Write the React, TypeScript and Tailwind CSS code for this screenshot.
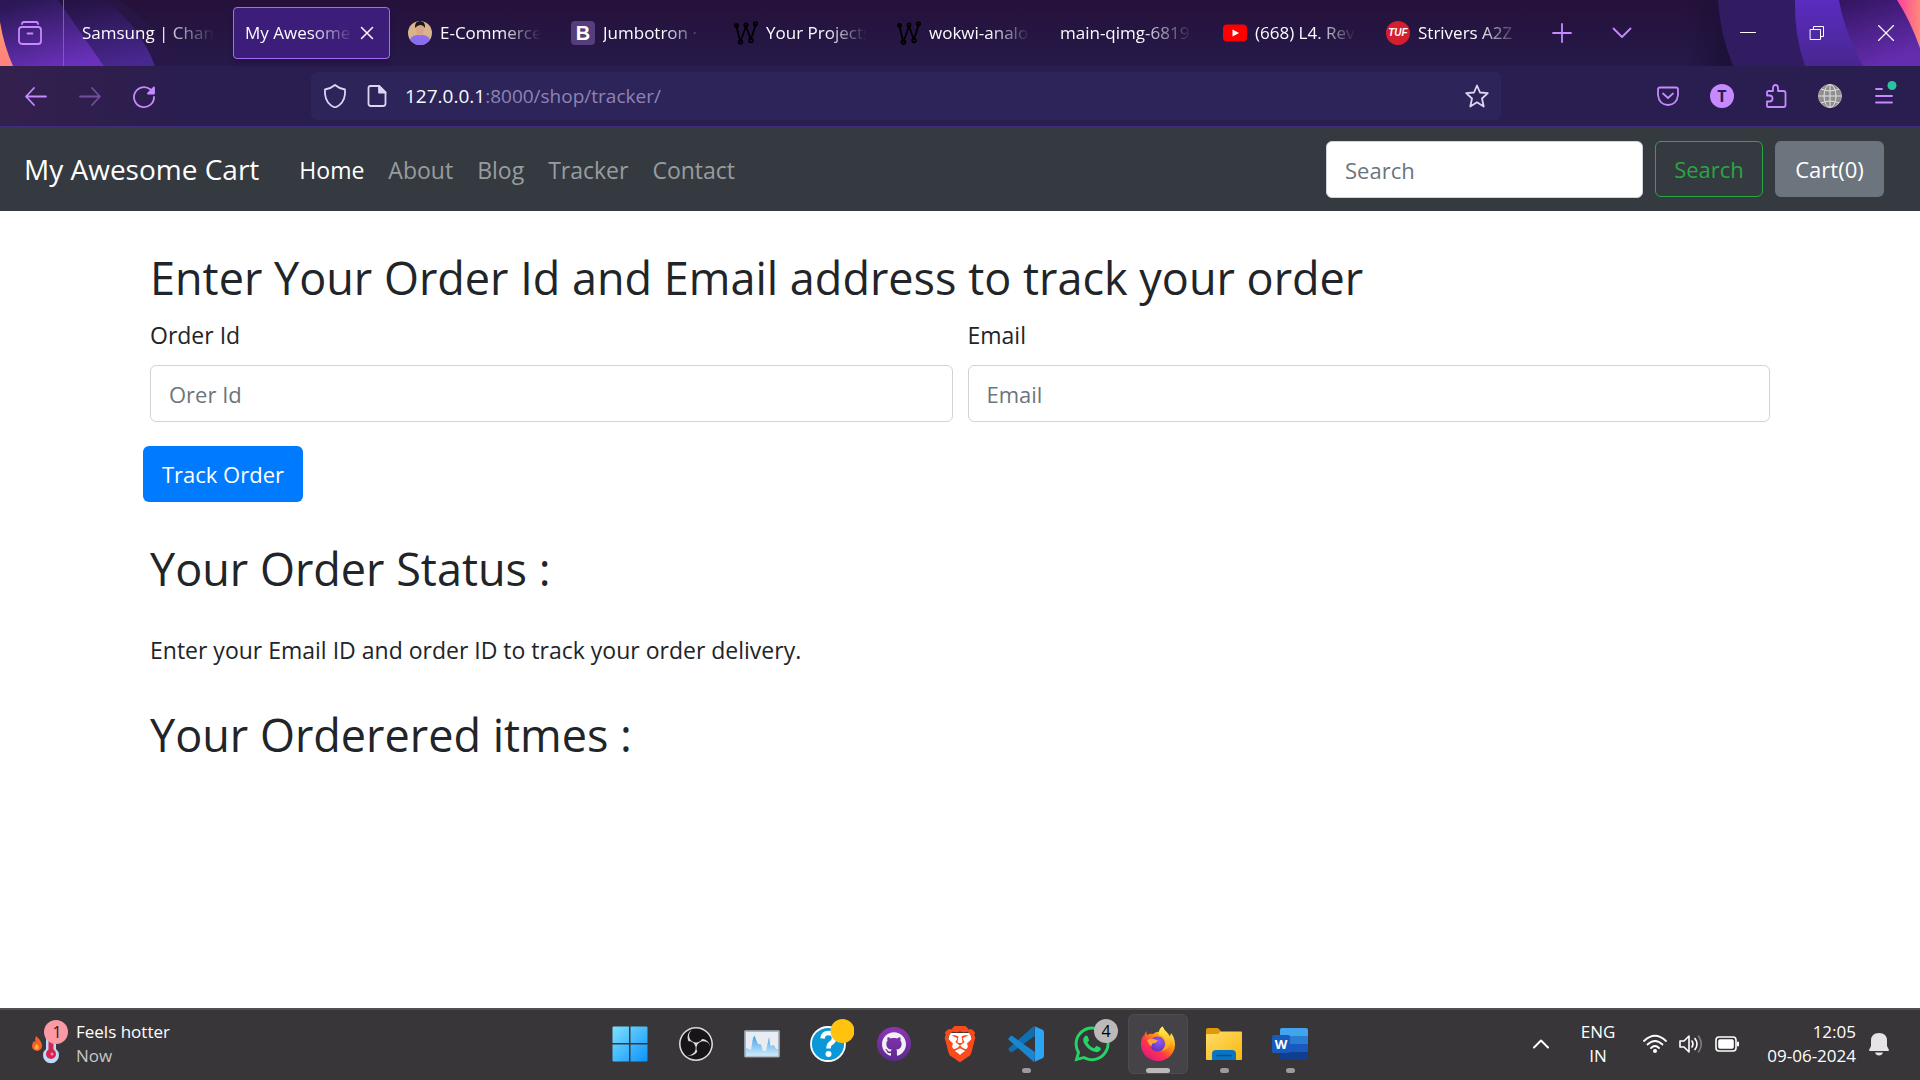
import React from "react";
import { SiBrave, SiGithub, SiObsstudio } from "react-icons/si";
import { FaWhatsapp } from "react-icons/fa";

const line = { fill: "none", strokeLinecap: "round", strokeLinejoin: "round" } as const;

function ThemeArt() {
  return (
    <div aria-hidden="true" className="absolute inset-0 flex justify-between overflow-hidden">
      <svg width="190" height="66" viewBox="0 0 190 66">
        <defs>
          <linearGradient id="la" x1="0.3" y1="0" x2="0.7" y2="1">
            <stop offset="0" stopColor="#2c1857" />
            <stop offset="1" stopColor="#6b31bd" />
          </linearGradient>
          <linearGradient id="lb" x1="0.2" y1="0" x2="0.5" y2="1">
            <stop offset="0" stopColor="#241343" />
            <stop offset="1" stopColor="#48278f" />
          </linearGradient>
          <linearGradient id="lo" x1="0" y1="0" x2="0" y2="1">
            <stop offset="0" stopColor="#ff9a6c" />
            <stop offset="1" stopColor="#ff8080" />
          </linearGradient>
        </defs>
        <path d="M58 0H120Q160 30 182 66H104Z" fill="#29174a" opacity="0.6" />
        <path d="M58 0H105Q140 26 155 66H104Z" fill="url(#lb)" />
        <path d="M0 0H58L104 66H0Z" fill="url(#la)" />
        <path d="M0 22Q4 46 13 66H0Z" fill="url(#lo)" />
      </svg>
      <svg width="240" height="66" viewBox="0 0 240 66">
        <defs>
          <linearGradient id="rs" x1="0" y1="0" x2="1" y2="0">
            <stop offset="0" stopColor="#1b1036" stopOpacity="0" />
            <stop offset="1" stopColor="#1b1036" />
          </linearGradient>
          <linearGradient id="rb" x1="0" y1="0" x2="0" y2="1">
            <stop offset="0" stopColor="#5a2cc0" />
            <stop offset="1" stopColor="#48268f" />
          </linearGradient>
          <linearGradient id="rc" x1="0" y1="0" x2="0.4" y2="1">
            <stop offset="0" stopColor="#321560" />
            <stop offset="1" stopColor="#642cae" />
          </linearGradient>
          <linearGradient id="rp" x1="0" y1="0" x2="1" y2="0">
            <stop offset="0" stopColor="#ff3f9e" />
            <stop offset="1" stopColor="#ff8a78" />
          </linearGradient>
        </defs>
        <path d="M5 0H40L54 66H5Z" fill="url(#rs)" />
        <path d="M38 0H240V66H53Q40 34 38 0Z" fill="#311c61" />
        <path d="M115 0H240V66H125Q114 34 115 0Z" fill="url(#rb)" />
        <path d="M159 0H240V66H183Q164 30 159 0Z" fill="url(#rc)" />
        <path d="M217 0H240V48Q230 20 217 0Z" fill="url(#rp)" />
      </svg>
    </div>
  );
}

function Portrait() {
  return (
    <svg width="24" height="24" viewBox="0 0 24 24">
      <clipPath id="face"><circle cx="12" cy="12" r="12" /></clipPath>
      <g clipPath="url(#face)">
        <rect width="24" height="24" fill="#d9b48c" />
        <path d="M0 24Q2 14 9 14H15Q22 14 24 24Z" fill="#8a6cf5" />
        <ellipse cx="12" cy="8.500" rx="4" ry="6" fill="#d8a58a" />
        <path d="M7 7Q6.500 0 12 0T17 7Q15 3.500 12 4T7 7Z" fill="#1c1416" />
      </g>
    </svg>
  );
}

function BootstrapMark() {
  return (
    <span className="flex size-6 items-center justify-center rounded bg-[#563d7c] font-['Liberation_Sans'] text-xl leading-none font-bold text-white">
      B
    </span>
  );
}

function WokwiMark() {
  return (
    <svg width="24" height="24" viewBox="0 0 24 24" {...line} stroke="#000" strokeWidth="1.8">
      <path d="M2.500 5L6 20Q7 20 12 5L16.500 18Q17 19 21.500 4" />
      <circle cx="2.500" cy="4.500" r="1.700" />
      <circle cx="12" cy="4" r="1.700" />
      <circle cx="21.500" cy="2.800" r="1.700" />
      <circle cx="6.500" cy="21" r="1.800" />
      <circle cx="17" cy="19.500" r="1.800" />
    </svg>
  );
}

function YoutubeMark() {
  return (
    <svg width="24" height="24" viewBox="0 0 24 24">
      <rect y="3.500" width="24" height="17" rx="4" fill="#f00" />
      <path d="M9.500 8.500L16 12L9.500 15.500Z" fill="#fff" />
    </svg>
  );
}

function TufMark() {
  return (
    <span className="flex size-6 items-center justify-center rounded-full bg-[#d51f30] font-['Liberation_Sans'] text-[10px] leading-none font-bold text-white italic">
      TUF
    </span>
  );
}

type TabInfo = { title: string; icon?: React.ReactNode; active?: boolean };

const tabs: TabInfo[] = [
  { title: "Samsung | Chang" },
  { title: "My Awesome", active: true },
  { title: "E-Commerce", icon: <Portrait /> },
  { title: "Jumbotron ·", icon: <BootstrapMark /> },
  { title: "Your Projects", icon: <WokwiMark /> },
  { title: "wokwi-analo", icon: <WokwiMark /> },
  { title: "main-qimg-6819" },
  { title: "(668) L4. Rev", icon: <YoutubeMark /> },
  { title: "Strivers A2Z", icon: <TufMark /> },
];

function Tab({ title, icon, active }: TabInfo) {
  return (
    <div className="w-[163px] shrink px-[3px] py-[7px]">
      <div
        role="tab"
        aria-selected={!!active}
        className={
          active
            ? "flex h-full items-center gap-1 rounded border border-[#a76bf5] bg-[#3d1d7a] pr-[13px] pl-[11px] shadow-md"
            : "flex h-full items-center gap-2 px-3"
        }
      >
        {icon && <span className="shrink-0">{icon}</span>}
        <span className="min-w-0 flex-1 overflow-hidden text-[17px] whitespace-nowrap [mask-image:linear-gradient(to_right,#000_60%,transparent)]">
          {title}
        </span>
        {active && (
          <button aria-label="Close tab" className="shrink-0">
            <svg width="18" height="18" viewBox="0 0 18 18" {...line} stroke="#fbfbfe" strokeWidth="1.500">
              <path d="M3.500 3.500L14.500 14.500M14.500 3.500L3.500 14.500" />
            </svg>
          </button>
        )}
      </div>
    </div>
  );
}

function TabStrip() {
  return (
    <div className="relative bg-linear-to-b from-[#25113a] to-[#26194a]">
      <ThemeArt />
      <div className="relative flex h-[66px] items-stretch">
        <div className="flex w-16 shrink-0 items-center justify-center border-r border-[#7d5cb0] pr-1">
          <button aria-label="Firefox View">
            <svg width="26" height="26" viewBox="0 0 26 26" {...line} stroke="#c689ff" strokeWidth="1.800">
              <path d="M5 4Q5 2 7 2H19Q21 2 21 4" />
              <rect x="2" y="7" width="22" height="17" rx="3" />
              <path d="M10.500 13.500H15.500" />
            </svg>
          </button>
        </div>
        <div role="tablist" className="ml-[3px] flex min-w-0">
          {tabs.map((t) => (
            <Tab key={t.title} {...t} />
          ))}
        </div>
        <button aria-label="New tab" className="flex w-14 items-center justify-center">
          <svg width="20" height="20" viewBox="0 0 20 20" {...line} stroke="#c689ff" strokeWidth="1.800">
            <path d="M10 1V19M1 10H19" />
          </svg>
        </button>
        <button aria-label="List all tabs" className="flex w-16 items-center justify-center">
          <svg width="20" height="20" viewBox="0 0 20 20" {...line} stroke="#c689ff" strokeWidth="1.800">
            <path d="M1.500 5.500L10 14L18.500 5.500" />
          </svg>
        </button>
        <div className="ml-auto flex">
          <button aria-label="Minimize" className="flex w-[69px] items-center justify-center">
            <svg width="16" height="16" viewBox="0 0 16 16" {...line} stroke="#fff"><path d="M.5 7.500H15.500" /></svg>
          </button>
          <button aria-label="Restore" className="flex w-[69px] items-center justify-center">
            <svg width="16" height="16" viewBox="0 0 16 16" {...line} stroke="#fff">
              <path d="M1.500 4.500H11.500V14.500H1.500ZM4.500 4.500V1.500H14.500V11.500H11.500" />
            </svg>
          </button>
          <button aria-label="Close window" className="flex w-[69px] items-center justify-center">
            <svg width="16" height="16" viewBox="0 0 16 16" {...line} stroke="#fff" strokeWidth="1.200">
              <path d="M.5 .5L15.500 15.500M15.500 .5L.5 15.500" />
            </svg>
          </button>
        </div>
      </div>
    </div>
  );
}

function ToolButton({ label, children }: { label: string; children: React.ReactNode }) {
  return (
    <button aria-label={label} className="flex h-12 w-[54px] items-center justify-center">
      <svg width="24" height="24" viewBox="0 0 24 24" {...line} stroke="#c689ff" strokeWidth="1.800" className="overflow-visible">
        {children}
      </svg>
    </button>
  );
}

function Toolbar() {
  return (
    <div className="flex items-center border-b border-[#3e2c7c] bg-linear-to-r from-[#33204d] via-[#2a1d4f] via-10% to-[#2a1d4f] py-[6px]">
      <div className="flex w-[311px] shrink-0 pl-[9px]">
        <ToolButton label="Back"><path d="M22 12.500H2M10 4L2 12.500L10 21" /></ToolButton>
        <ToolButton label="Forward"><g opacity="0.45"><path d="M2 12.500H22M14 4L22 12.500L14 21" /></g></ToolButton>
        <ToolButton label="Reload">
          <path d="M22 13A10 10 0 1 1 18.500 5.500" />
          <path d="M22 3.500V9.500H16Z" fill="#c689ff" />
        </ToolButton>
      </div>
      <div className="flex h-12 min-w-0 flex-1 items-center rounded-md bg-[#2d2459] px-3">
        <svg width="24" height="24" viewBox="0 0 24 24" {...line} stroke="#e0d4f5" strokeWidth="1.800">
          <path d="M12 1Q16 4.500 22 5.500V10Q21 20 12 23.500Q3 20 2 10V5.500Q8 4.500 12 1Z" />
        </svg>
        <svg width="24" height="24" viewBox="0 0 24 24" {...line} stroke="#e0d4f5" strokeWidth="1.800" className="mr-4 ml-[18px]">
          <path d="M5.500 2H14L20.500 8.500V19.500Q20.500 22 18 22H6Q3.500 22 3.500 19.500V4Q3.500 2 5.500 2Z" />
          <path d="M14 2V8.500H20.500Z" fill="#e0d4f5" />
        </svg>
        <p className="min-w-0 flex-1 truncate text-[19px] text-[#8d84b4]">
          <span className="text-[#fbfbfe]">127.0.0.1</span>:8000/shop/tracker/
        </p>
        <button aria-label="Bookmark this page">
          <svg width="24" height="24" viewBox="0 0 24 24" {...line} stroke="#e0d4f5" strokeWidth="1.800">
            <path d="M12 1.500L15 8.500L22.800 9.200L17 14.500L18.700 22.500L12 18.300L5.300 22.500L7 14.500L1.200 9.200L9 8.500Z" />
          </svg>
        </button>
      </div>
      <div className="flex w-[419px] shrink-0 justify-end pr-[9px]">
        <ToolButton label="Save to Pocket">
          <path d="M4 3.500H20Q22 3.500 22 5.500V11Q21 20.500 12 21Q3 20.500 2 11V5.500Q2 3.500 4 3.500Z" />
          <path d="M7 9.500L12 14L17 9.500" />
        </ToolButton>
        <button aria-label="Account" className="flex h-12 w-[54px] items-center justify-center">
          <span className="flex size-6 items-center justify-center rounded-full bg-[#c689ff] text-base leading-none font-bold text-[#2a1d4f]">T</span>
        </button>
        <ToolButton label="Extensions">
          <path d="M3 11V8.500Q3 7 4.500 7H9V4Q9 1 11.500 1T14 4V7H19.500Q21.500 7 21.500 9V21Q21.500 23 19.500 23H4Q3 23 3 22V17.500H5.500Q8.500 17.500 8.500 14.500T5.500 11.500H3" />
        </ToolButton>
        <button aria-label="Translate" className="flex h-12 w-[54px] items-center justify-center">
          <svg width="24" height="24" viewBox="0 0 24 24" fill="none" stroke="#e2e2e2" strokeWidth="1">
            <circle cx="12" cy="12" r="11.500" fill="#8e8e8e" stroke="#aaa" />
            <ellipse cx="12" cy="12" rx="6" ry="11.500" />
            <path d="M12 .5V23.500M.5 12H23.500M3 5Q12 9 21 5M3 19Q12 15 21 19" />
          </svg>
        </button>
        <ToolButton label="Open application menu">
          <path d="M4 5H10M4 12H20M4 18.500H20" />
          <circle cx="20" cy="1.500" r="4.500" fill="#2ac3a2" stroke="none" />
        </ToolButton>
      </div>
    </div>
  );
}

const navLinks = ["Home", "About", "Blog", "Tracker", "Contact"];

function Navbar() {
  return (
    <nav className="flex items-center bg-[#343a40] px-6 pt-[14px] pb-[13px]">
      <a href="#home" className="mr-7 text-[28px] leading-[45px] text-white">My Awesome Cart</a>
      <ul className="flex">
        {navLinks.map((name, i) => (
          <li key={name}>
            <a href={"#" + name.toLowerCase()} className={i === 0 ? "px-3 text-white" : "px-3 text-[#999c9f]"}>
              {name}
            </a>
          </li>
        ))}
      </ul>
      <form className="mr-3 ml-auto flex items-start gap-3 text-[22px]" onSubmit={(e) => e.preventDefault()}>
        <input
          type="search"
          aria-label="Search"
          placeholder="Search"
          className="h-[57px] w-[317px] rounded-md border border-[#ced4da] bg-white px-[18px] text-[#495057] placeholder:text-[#6c757d]"
        />
        <button type="submit" className="h-14 w-[108px] rounded-md border border-[#28a745] text-[#28a745]">Search</button>
        <button type="button" className="h-14 w-[109px] rounded-md bg-[#6c757d] text-white">Cart(0)</button>
      </form>
    </nav>
  );
}

function Field({ id, label, placeholder, type }: { id: string; label: string; placeholder: string; type: string }) {
  return (
    <div className="flex flex-col gap-3">
      <label htmlFor={id}>{label}</label>
      <input
        id={id}
        type={type}
        placeholder={placeholder}
        className="h-[57px] w-full rounded-md border border-[#ced4da] px-[18px] text-[22px] text-[#495057] placeholder:text-[#6c757d]"
      />
    </div>
  );
}

function Heading({ children }: { children: React.ReactNode }) {
  return <h2 className="mb-3 pt-1 text-[45px] leading-[54px]">{children}</h2>;
}

function TrackerPage() {
  return (
    <main className="flex-1 bg-white px-[150px] pt-9 text-[#212529]">
      <Heading>Enter Your Order Id and Email address to track your order</Heading>
      <form onSubmit={(e) => e.preventDefault()}>
        <div className="mb-6 grid grid-cols-2 gap-[15px]">
          <Field id="orderId" label="Order Id" placeholder="Orer Id" type="text" />
          <Field id="email" label="Email" placeholder="Email" type="email" />
        </div>
        <button type="submit" className="-ml-[7px] h-14 w-40 rounded-md bg-[#007bff] text-[22px] text-white">Track Order</button>
      </form>
      <section className="mt-9">
        <Heading>Your Order Status :</Heading>
        <p className="mt-9">Enter your Email ID and order ID to track your order delivery.</p>
      </section>
      <section className="mt-9">
        <Heading>Your Orderered itmes :</Heading>
      </section>
    </main>
  );
}

function WindowsIcon() {
  return (
    <svg width="36" height="36" viewBox="0 0 36 36">
      <linearGradient id="win" x1="0" y1="0" x2="1" y2="1" gradientUnits="objectBoundingBox">
        <stop offset="0" stopColor="#7fe0ff" />
        <stop offset="1" stopColor="#0a93fb" />
      </linearGradient>
      <path d="M1.500 .5H17V17H.5V1.500Q.5 .5 1.500 .5ZM18.500 .5H34.500Q35.500 .5 35.500 1.500V17H18.500ZM.5 18.500H17V35.500H1.500Q.5 35.500 .5 34.500ZM18.500 18.500H35.500V34.500Q35.500 35.500 34.500 35.500H18.500Z" fill="url(#win)" />
    </svg>
  );
}

function ObsIcon() {
  return (
    <span className="flex size-[34px] items-center justify-center rounded-full bg-[#17151a]">
      <SiObsstudio size={34} color="#dcdcdc" />
    </span>
  );
}

function MonitorIcon() {
  return (
    <svg width="36" height="36" viewBox="0 0 36 36">
      <linearGradient id="mon" x1="0" y1="0" x2="0" y2="1">
        <stop offset="0" stopColor="#3d9fe6" />
        <stop offset="1" stopColor="#cdeafa" />
      </linearGradient>
      <rect x=".5" y="4.500" width="35" height="26.500" rx="1" fill="#e9edf1" stroke="#8a98a5" />
      <rect x="1.500" y="5.500" width="33" height="24.500" fill="none" stroke="#a9b6c1" />
      <path d="M2 29.500V22L5 23L7 24L9 12L10.500 9.500L12 13.500L14 18L17 18.500L19 25H22L25 11L26.500 20L30 19L32 23H34V29.500Z" fill="url(#mon)" />
    </svg>
  );
}

function HelpIcon() {
  return (
    <svg width="44" height="44" viewBox="0 0 44 44" className="mb-[8px] ml-[8px]">
      <circle cx="18" cy="26" r="17" fill="#0a98d8" stroke="#fff" strokeWidth="1.800" />
      <path d="M12.500 20.500Q13 15 18.500 15T24 20.500Q24 23.500 20.500 25.500Q18.500 27 18.500 30.500" fill="none" stroke="#fff" strokeWidth="4.500" />
      <circle cx="18.500" cy="36" r="3" fill="#fff" />
      <circle cx="32.500" cy="13" r="12" fill="#ffc20e" />
    </svg>
  );
}

function GithubIcon() {
  return (
    <span className="flex size-[34px] items-center justify-center rounded-full bg-linear-to-b from-[#8e35b5] to-[#5b2a8c]">
      <SiGithub size={24} color="#f3eff8" />
    </span>
  );
}

function BraveIcon() {
  return (
    <span className="relative flex size-9 items-center justify-center">
      <svg width="36" height="36" viewBox="0 0 36 36" className="absolute inset-0">
        <path d="M8 7H28L30 14L26 28L18 33L10 28L6 14Z" fill="#fff" />
      </svg>
      <SiBrave size={36} color="#fb4a1c" className="relative" />
    </span>
  );
}

function VsCodeIcon() {
  return (
    <svg width="36" height="36" viewBox="0 0 36 36">
      <path d="M26 0L.7 22.200Q0 23 .7 23.800L2.500 26Q3.400 26.600 4.200 26L26.800 10V4Z" fill="#0f6fb4" />
      <path d="M26 36L.7 13.800Q0 13 .7 12.200L2.500 10Q3.400 9.400 4.200 10L26.800 26V32Z" fill="#1a86d0" />
      <path d="M26 0L34.500 3.800Q36 4.500 36 6V30Q36 31.500 34.500 32.200L26 36Q27 35.500 27 34V2Q27 .5 26 0Z" fill="#2aa6f4" />
    </svg>
  );
}

function WhatsappIcon() {
  return (
    <span className="relative flex">
      <FaWhatsapp size={40} color="#25d366" />
      <span className="absolute -top-[5px] -right-[6px] flex size-6 items-center justify-center rounded-full bg-[#bdb9b9] text-base leading-none text-black">
        4
      </span>
    </span>
  );
}

function FirefoxIcon() {
  return (
    <svg width="36" height="36" viewBox="0 0 36 36">
      <defs>
        <linearGradient id="fx" x1="0.85" y1="0.1" x2="0.2" y2="0.95">
          <stop offset="0" stopColor="#fff44f" />
          <stop offset="0.35" stopColor="#ff980e" />
          <stop offset="0.65" stopColor="#ff3647" />
          <stop offset="1" stopColor="#e31587" />
        </linearGradient>
        <radialGradient id="fp" cx="0.6" cy="0.3" r="0.8">
          <stop offset="0" stopColor="#9059ff" />
          <stop offset="1" stopColor="#5b2fb0" />
        </radialGradient>
        <linearGradient id="fy" x1="0.5" y1="0" x2="0.5" y2="1">
          <stop offset="0" stopColor="#fff44f" />
          <stop offset="1" stopColor="#ff980e" />
        </linearGradient>
      </defs>
      <path d="M6.500 5Q6 8 7.500 9Q10 7 13 8Q17 5 19 6Q19 3 22.500 .5Q24 4 28 7.500L30 10.500L31 7Q35 12 35 18.500A17 16.500 0 0 1 1 18.500Q1 12 3.500 9.500L4 11.500Q4.500 7 6.500 5Z" fill="url(#fx)" />
      <circle cx="17.500" cy="18" r="7.500" fill="url(#fp)" />
      <path d="M22.500 .5Q18 4 19 9Q25 10 25.500 16Q26 22 21 25.500Q30 24 30.500 15Q30 10 27 6.800Q24 4 22.500 .5Z" fill="url(#fy)" />
      <path d="M7 14Q11 11.500 18 14.500Q16 17.500 12.500 17.500Q11 19 11.500 21Q8.500 18 7 14Z" fill="#ffa436" />
    </svg>
  );
}

function FolderIcon() {
  return (
    <svg width="36" height="36" viewBox="0 0 36 36">
      <linearGradient id="fo" x1="0" y1="0" x2="1" y2="1">
        <stop offset="0" stopColor="#ffdc6b" />
        <stop offset="1" stopColor="#f8b90c" />
      </linearGradient>
      <path d="M0 4Q0 2 2 2H11Q12.500 2 13.500 3.500L15 5.500V12H0Z" fill="#e09a08" />
      <path d="M0 9Q0 8 1 8H11Q12.500 8 13.500 6.500Q14 5.500 15.500 5.500H35Q36 5.500 36 6.500V33Q36 34 35 34H1Q0 34 0 33Z" fill="url(#fo)" />
      <path d="M6 34V28Q6 24 10 24H26Q30 24 30 28V34Z" fill="#0a74c4" />
      <path d="M11 29.500H25" stroke="#04508f" strokeWidth="1.500" strokeLinecap="round" />
    </svg>
  );
}

function WordIcon() {
  return (
    <svg width="36" height="36" viewBox="0 0 36 36">
      <path d="M8 4Q8 2 10 2H34Q36 2 36 4V10H8Z" fill="#41a5ee" />
      <path d="M8 10H36V18H8Z" fill="#2b7cd3" />
      <path d="M8 18H36V26H8Z" fill="#185abd" />
      <path d="M8 26H36V32Q36 34 34 34H10Q8 34 8 32Z" fill="#103f91" />
      <rect y="9" width="18" height="18" rx="2" fill="#185abd" />
      <text x="9" y="22.500" textAnchor="middle" fontFamily="Open Sans" fontSize="13" fontWeight="700" fill="#fff">W</text>
    </svg>
  );
}

type TaskbarApp = { name: string; icon: React.ReactNode; state?: "open" | "active" };

const apps: TaskbarApp[] = [
  { name: "Start", icon: <WindowsIcon /> },
  { name: "OBS Studio", icon: <ObsIcon /> },
  { name: "Resource monitor", icon: <MonitorIcon /> },
  { name: "Get Help", icon: <HelpIcon /> },
  { name: "GitHub Desktop", icon: <GithubIcon /> },
  { name: "Brave", icon: <BraveIcon /> },
  { name: "Visual Studio Code", icon: <VsCodeIcon />, state: "open" },
  { name: "WhatsApp", icon: <WhatsappIcon /> },
  { name: "Firefox", icon: <FirefoxIcon />, state: "active" },
  { name: "File Explorer", icon: <FolderIcon />, state: "open" },
  { name: "Word", icon: <WordIcon />, state: "open" },
];

function Taskbar() {
  return (
    <footer className="grid h-[72px] grid-cols-[1fr_auto_1fr] items-center border-t-2 border-[#50504e] bg-[#383639] pb-[2px] text-[17px] leading-6 text-white">
      <button className="flex items-center gap-2 pl-[30px] text-left">
        <svg width="38" height="48" viewBox="0 0 38 48">
          <path d="M6 16Q12 21 12 26A5 5 0 0 1 2 26Q2 23 4 21Q5 22 5.500 22Q4.500 19 6 16Z" fill="#f4622c" />
          <path d="M6.500 24Q9 26 9 28A2.500 2.500 0 0 1 4.500 28Q5 26 6.500 24Z" fill="#ffb02e" />
          <path d="M16 12Q16 7 21 7T26 12V29A8 8 0 1 1 16 29Z" fill="#b9dcf8" />
          <path d="M18.500 16H23.500V31H18.500Z" fill="#d8234e" />
          <circle cx="21" cy="34" r="5" fill="#d8234e" />
          <circle cx="22" cy="34" r="1.500" fill="#f48aa0" />
          <circle cx="26" cy="12" r="12" fill="#fb9aa5" />
          <text x="27" y="18" textAnchor="middle" fontFamily="Open Sans" fontSize="16" fill="#222">1</text>
        </svg>
        <span className="flex flex-col">
          <span>Feels hotter</span>
          <span className="text-[#c6c5c6]">Now</span>
        </span>
      </button>
      <div className="flex">
        {apps.map((app) => (
          <button key={app.name} aria-label={app.name} className="relative flex h-[60px] w-[66px] items-center justify-center px-[3px]">
            <span
              className={
                app.state === "active"
                  ? "flex size-[60px] items-center justify-center rounded-md border border-[#4e4c50] bg-[#454347]"
                  : "flex size-[60px] items-center justify-center"
              }
            >
              {app.icon}
            </span>
            {app.state === "active" && <span className="absolute bottom-[1px] h-[5px] w-6 rounded-full bg-[#bdb9b9]" />}
            {app.state === "open" && <span className="absolute bottom-[1px] h-[5px] w-[9px] rounded-full bg-[#9c9a9c]" />}
          </button>
        ))}
      </div>
      <div className="flex items-center justify-end pr-[30px]">
        <button aria-label="Show hidden icons" className="mr-8">
          <svg width="16" height="16" viewBox="0 0 16 16" {...line} stroke="#fff" strokeWidth="2"><path d="M1 11.500L8 4.500L15 11.500" /></svg>
        </button>
        <button className="mr-7 text-center">
          ENG
          <br />
          IN
        </button>
        <button aria-label="Network, volume and battery" className="mr-7 flex items-center gap-3">
          <svg width="24" height="20" viewBox="0 0 24 20" {...line} stroke="#fff" strokeWidth="1.800">
            <path d="M1 7Q12 -3.500 23 7M4.500 10.500Q12 3.500 19.500 10.500M8 14Q12 10 16 14" />
            <circle cx="12" cy="17" r="2" fill="#fff" stroke="none" />
          </svg>
          <svg width="24" height="20" viewBox="0 0 24 20" {...line} stroke="#fff" strokeWidth="1.600">
            <path d="M1 7H5L10 2V18L5 13H1ZM13 7Q15 10 13 13M16 4.500Q20 10 16 15.500" />
            <path d="M19.500 2Q25 10 19.500 18" opacity="0.35" />
          </svg>
          <svg width="24" height="20" viewBox="0 0 24 20" {...line} stroke="#fff" strokeWidth="1.600">
            <rect x="1" y="3" width="20" height="14" rx="3" />
            <rect x="4" y="6" width="14" height="8" rx="1" fill="#fff" />
            <path d="M23 8.500V11.500" strokeWidth="2" />
          </svg>
        </button>
        <button className="mr-3 text-right">
          12:05
          <br />
          09-06-2024
        </button>
        <button aria-label="Notifications">
          <svg width="22" height="24" viewBox="0 0 22 24" fill="#e6e4e6">
            <path d="M11 1Q19 1 19 9V14L21 18Q21 19 20 19H2Q1 19 1 18L3 14V9Q3 1 11 1ZM7 20.500H15Q14 23.500 11 23.500T7 20.500Z" />
          </svg>
        </button>
      </div>
    </footer>
  );
}

export default function App() {
  return (
    <div className="flex min-h-screen flex-col bg-white font-['Open_Sans','Noto_Sans',sans-serif] text-[23px] leading-9">
      <header className="text-[#fbfbfe]">
        <TabStrip />
        <Toolbar />
      </header>
      <Navbar />
      <TrackerPage />
      <Taskbar />
    </div>
  );
}
